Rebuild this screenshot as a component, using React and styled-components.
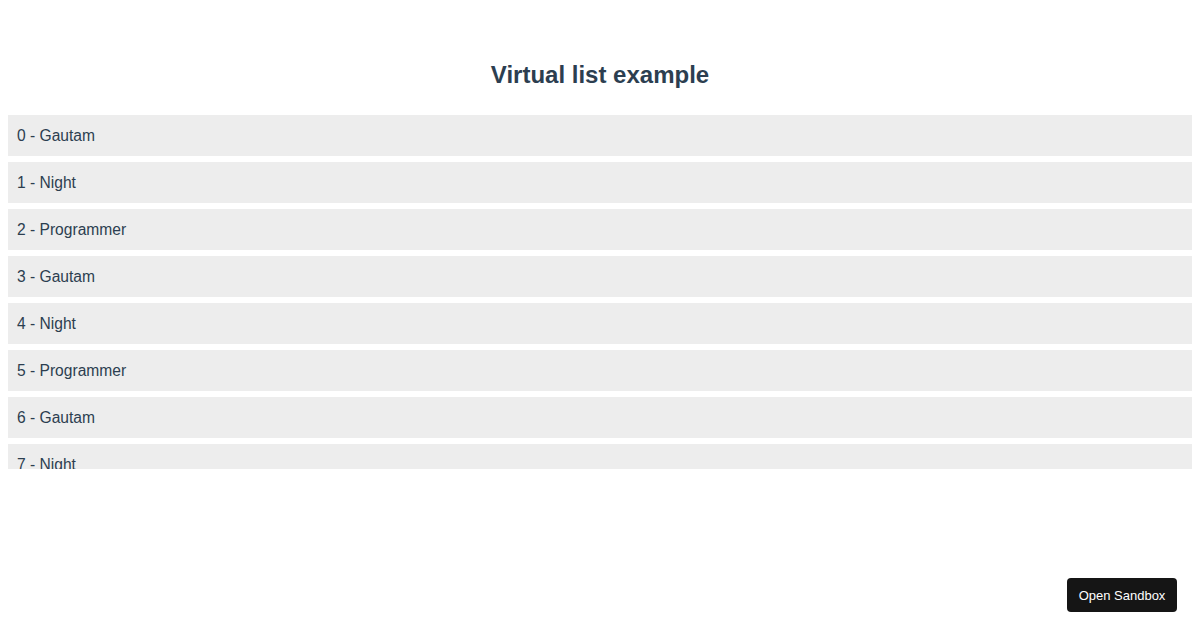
import React from "react";
import styled, { createGlobalStyle } from "styled-components";

const Global = createGlobalStyle`
  html, body { margin: 0; padding: 0; background: #fff; }
  body { font-family: "Liberation Sans", Arial, sans-serif; color: #2c3e50; }
`;

const Page = styled.div`
  padding: 0 8px;
  width: 1200px;
  height: 630px;
  box-sizing: border-box;
  position: relative;
`;

const Title = styled.h2`
  margin: 0;
  padding-top: 61px;
  height: 115px;
  box-sizing: border-box;
  text-align: center;
  font-size: 24px;
  line-height: 28px;
  font-weight: 700;
  color: #2c3e50;
`;

const ListViewport = styled.div`
  height: 354px;
  overflow: hidden;
  display: flex;
  flex-direction: column;
  gap: 6px;
`;

const Row = styled.div`
  flex: none;
  height: 41px;
  line-height: 41px;
  background: #ededed;
  padding-left: 9px;
  font-size: 15.6px;
  color: #2c3e50;
`;

const SandboxButton = styled.button`
  position: absolute;
  right: 23px;
  bottom: 18px;
  width: 110px;
  height: 34px;
  background: #151515;
  color: #fff;
  border: none;
  border-radius: 4px;
  font-family: "Liberation Sans", Arial, sans-serif;
  font-size: 13px;
  cursor: pointer;
`;

const names = ["Gautam", "Night", "Programmer"];
const items = Array.from({ length: 8 }, (_, i) => `${i} - ${names[i % 3]}`);

export default function App() {
  return (
    <>
      <Global />
      <Page>
        <Title>Virtual list example</Title>
        <ListViewport>
          {items.map((t) => (
            <Row key={t}>{t}</Row>
          ))}
        </ListViewport>
        <SandboxButton>Open Sandbox</SandboxButton>
      </Page>
    </>
  );
}
